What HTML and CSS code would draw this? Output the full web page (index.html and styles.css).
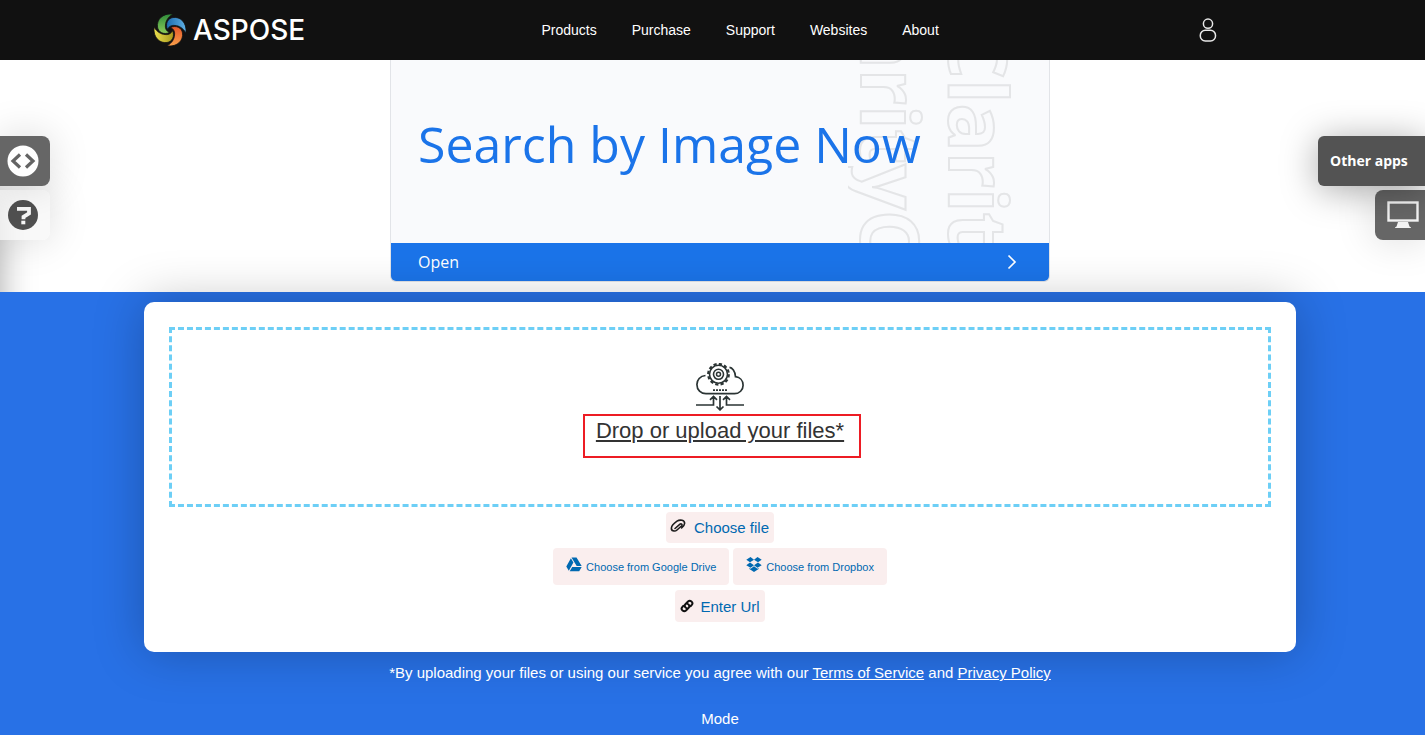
FILE: index.html
```html
<!DOCTYPE html>
<html lang="en">
<head>
<meta charset="utf-8">
<meta name="viewport" content="width=device-width, initial-scale=1">
<title>Aspose - Search by Image</title>
<link rel="stylesheet" href="styles.css">
</head>
<body>
<header class="header">
  <div class="header-inner">
    <a class="logo" href="#">
      <svg class="logo-mark" viewBox="0 0 34 34" aria-hidden="true">
        <defs>
          <linearGradient id="g-blue" x1="0" y1="1" x2="0" y2="0"><stop offset="0" stop-color="#1c6bb0"/><stop offset="1" stop-color="#5fb0e4"/></linearGradient>
          <linearGradient id="g-orange" x1="0" y1="1" x2="0" y2="0"><stop offset="0" stop-color="#e4572a"/><stop offset="1" stop-color="#f9a04a"/></linearGradient>
          <linearGradient id="g-yellow" x1="0" y1="1" x2="0" y2="0"><stop offset="0" stop-color="#a8991c"/><stop offset="1" stop-color="#ece04e"/></linearGradient>
          <linearGradient id="g-green" x1="0" y1="1" x2="0" y2="0"><stop offset="0" stop-color="#8ccb5a"/><stop offset="1" stop-color="#2e8b3a"/></linearGradient>
          <path id="blade" stroke="#111" stroke-width=".8" d="M20 1C9 0 3.500 7 4.500 14c.8 5.500 6.500 8 12 5.500-3.500-1.500-4.500-4.500-4-7.500C12.700 8 15 4 20 1z"/>
        </defs>
        <use href="#blade" fill="url(#g-green)"/>
        <use href="#blade" fill="url(#g-blue)" transform="rotate(90 17 17)"/>
        <use href="#blade" fill="url(#g-orange)" transform="rotate(180 17 17)"/>
        <use href="#blade" fill="url(#g-yellow)" transform="rotate(270 17 17)"/>
      </svg>
      <span>ASPOSE</span>
    </a>
    <nav class="nav">
      <a href="#">Products</a>
      <a href="#">Purchase</a>
      <a href="#">Support</a>
      <a href="#">Websites</a>
      <a href="#">About</a>
    </nav>
    <button class="user" type="button" aria-label="Account">
      <svg viewBox="0 0 18 24" width="18" height="24" fill="none" stroke="#e8e8e8" stroke-width="1.5" aria-hidden="true">
        <circle cx="9" cy="5.7" r="4.6"/>
        <rect x="1.3" y="12.2" width="15.2" height="10.8" rx="5"/>
      </svg>
    </button>
  </div>
</header>

<section class="banner">
  <div class="ad">
    <div class="ad-body">
      <svg class="ad-art" viewBox="0 0 201 183" aria-hidden="true">
        <text transform="translate(13 -115) rotate(90)">ClarityClarity</text>
        <text transform="translate(101 -32) rotate(90)">ClarityClarity</text>
      </svg>
      <a class="ad-title" href="#">Search by Image Now</a>
    </div>
    <a class="ad-open" href="#">
      <span>Open</span>
      <svg viewBox="0 0 10 16" width="10" height="16" fill="none" stroke="#fff" stroke-width="1.700" aria-hidden="true"><path d="M1.500 1.500L8 8l-6.500 6.500"/></svg>
    </a>
  </div>

  <div class="side side-left">
    <button class="tab tab-dark" type="button" aria-label="Code">
      <svg viewBox="0 0 32 32" width="32" height="32" aria-hidden="true"><circle cx="16" cy="16" r="15.500" fill="#fff"/><path d="M13 9.500L6 16l7 6.500M19 9.500l7 6.500-7 6.500" fill="none" stroke="#646464" stroke-width="3.200"/></svg>
    </button>
    <button class="tab tab-light" type="button" aria-label="Help">
      <svg viewBox="0 0 32 32" width="32" height="32" aria-hidden="true"><circle cx="16" cy="16" r="15" fill="#505050"/><path d="M10 9.900h12v4.600l-5.500 3.300v2.400" fill="none" stroke="#f7f7f7" stroke-width="3.800"/><path d="M14.300 21.700h4v3.600h-4z" fill="#f7f7f7"/></svg>
    </button>
  </div>
  <div class="side side-right">
    <a class="other-apps" href="#">Other apps</a>
    <button class="tab tab-screen" type="button" aria-label="Desktop">
      <svg viewBox="0 0 32 28" width="32" height="28" aria-hidden="true"><rect x="1.500" y="1.500" width="29" height="18" fill="none" stroke="#f4f4f4" stroke-width="2.400"/><path d="M11 21h10l1.500 4.500 1.500 1v.5H8v-.5l1.500-1z" fill="#f4f4f4"/></svg>
    </button>
  </div>
</section>

<main class="main">
  <div class="card">
    <div class="dropzone">
      <svg class="cloud" viewBox="0 0 48 48" width="48" height="48" fill="none" stroke="#2b3434" stroke-width="1.700" aria-hidden="true">
        <path d="M9.500 12.500C4 13 .9 17 .9 21.500c0 5.500 4 9.200 9 9.200h28.500c5 0 8.700-3.700 8.700-8.500 0-5-3.500-8-7.600-8.500C39.300 8 36 4.500 33.500 4.300"/>
        <circle cx="22.500" cy="11.300" r="9" stroke-width="1.600"/>
        <circle cx="22.500" cy="11.300" r="10.300" stroke-width="2.200" stroke-dasharray="3.200 2.193"/>
        <circle cx="22.500" cy="11.300" r="5" stroke-width="1.600"/><circle cx="22.500" cy="11.300" r="2" stroke-width="1.500"/>
        <path d="M17 27.100h14" stroke-dasharray="2 1" stroke-width="1.800"/>
        <path d="M0 42h17.500v-8M14 36.800l3.500-3.300 3.500 3.300M48 42H30.500v-8M27 36.800l3.500-3.300 3.500 3.300M24 33v13.500M20.500 43.500l3.500 3.400 3.500-3.400"/>
      </svg>
      <div class="highlight">
        <label class="drop-label" for="file">Drop or upload your files*</label>
        <input class="file-input" id="file" type="file" multiple>
      </div>
    </div>
    <div class="actions">
      <button class="pick pick-file" type="button">
        <svg viewBox="0 0 16 16" width="16" height="16" fill="none" stroke="#1c1c1c" stroke-width="1.600" stroke-linecap="round" aria-hidden="true"><path d="M5 10.500l5-4.300c1.200-1 2.700.4 1.700 1.600L7 12c-2.300 2-6 .9-5.600-2C1.700 7.500 4.500 5 7 3.200c3-2 7.800-1.200 7.600 2.300-.1 2-1.600 3.300-3 4.500"/></svg>
        <span>Choose file</span>
      </button>
      <div class="cloud-row">
        <button class="pick pick-cloud" type="button">
          <svg viewBox="0 0 16 15" width="16" height="15" fill="#0069b1" aria-hidden="true"><path d="M5.500.5h5L15.700 9h-5zM4.900 1.300l2.500 4.200-4.600 8.200L.3 9.500zM6.200 10h9.500l-2.500 4.300H3.700z"/></svg>
          <span>Choose from Google Drive</span>
        </button>
        <button class="pick pick-cloud" type="button">
          <svg viewBox="0 0 16 15" width="16" height="15" fill="#0069b1" aria-hidden="true"><path d="M4.500 0L8 2.700 4 5.300.3 2.700zM11.500 0L8 2.700l4 2.600 3.700-2.600zM4 5.500L8 8.200l-3.500 2.600L.3 8.200zM12 5.500L8 8.200l3.500 2.600 4.200-2.600zM8 9.200l3.400 2.500 1.200-.8v1.200L8 15l-4.600-2.900v-1.200l1.200.8z"/></svg>
          <span>Choose from Dropbox</span>
        </button>
      </div>
      <button class="pick pick-url" type="button">
        <svg viewBox="0 0 14 14" width="14" height="14" fill="none" stroke="#111" stroke-width="2" stroke-linecap="round" aria-hidden="true"><path d="M6.200 9c-1.700-1-1.900-2.500-.8-3.700L8 2.500c2.200-2 5.700.7 3.900 3.200L10.700 7.200M7.800 5c1.700 1 1.900 2.500.8 3.700L6 11.500c-2.200 2-5.700-.7-3.900-3.200L3.300 6.800"/></svg>
        <span>Enter Url</span>
      </button>
    </div>
  </div>
  <p class="terms">*By uploading your files or using our service you agree with our <a href="#">Terms of Service</a> and <a href="#">Privacy Policy</a></p>
  <p class="mode">Mode</p>
</main>
</body>
</html>
```

FILE: styles.css
```css
* {
  box-sizing: border-box;
}

body {
  margin: 0;
  min-height: 100vh;
  display: flex;
  flex-direction: column;
  font-family: "Liberation Sans", Arial, sans-serif;
  font-size: 15px;
  color: #fff;
  background: #2871e6;
}

a {
  color: inherit;
}

button {
  border: 0;
  padding: 0;
  font-family: inherit;
  cursor: pointer;
}

svg {
  flex: none;
}

.header {
  position: relative;
  z-index: 3;
  height: 60px;
  padding: 0 47px 0 16px;
  background: #111;
}

.header-inner {
  display: flex;
  align-items: center;
  justify-content: space-between;
  max-width: 1088px;
  height: 100%;
  margin: 0 auto;
}

.logo {
  display: flex;
  align-items: center;
  gap: 6px;
  font-family: Inter, sans-serif;
  font-size: 28px;
  font-weight: 500;
  line-height: 34px;
  text-decoration: none;
}

.logo-mark {
  width: 34px;
  height: 34px;
}

.nav {
  display: flex;
  gap: 35px;
  font-size: 14px;
}

.nav a {
  text-decoration: none;
}

.user {
  display: flex;
  align-items: center;
  justify-content: center;
  width: 66px;
  height: 60px;
  background: none;
}

.banner {
  position: relative;
  overflow: hidden;
  padding: 0 0 10px 15px;
  background: #fff;
}

.ad {
  max-width: 660px;
  margin: 0 auto;
  overflow: hidden;
  border: 1px solid #e2e4e8;
  border-top: 0;
  border-radius: 0 0 6px 6px;
  font-family: "Open Sans", "Noto Sans", sans-serif;
}

.ad-body {
  position: relative;
  display: flex;
  align-items: center;
  height: 183px;
  padding: 0 27px 16px;
  background: #f9fafc;
}

.ad-art {
  position: absolute;
  top: 0;
  right: 0;
  width: 201px;
  height: 183px;
}

.ad-art text {
  fill: none;
  stroke: #e4e5e7;
  stroke-width: 2px;
  font-size: 80px;
  font-weight: 700;
}

.ad-title {
  position: relative;
  color: #1b74e9;
  font-size: 50px;
  line-height: 60px;
  text-decoration: none;
  white-space: nowrap;
}

.ad-open {
  display: flex;
  align-items: center;
  justify-content: space-between;
  height: 38px;
  padding: 0 32px 0 27px;
  background: #1b74e9;
  font-size: 16px;
  text-decoration: none;
}

.side {
  position: absolute;
  top: 76px;
  display: flex;
  flex-direction: column;
  gap: 4px;
}

.side-left {
  left: 0;
}

.side-left::before {
  content: "";
  position: absolute;
  top: 54px;
  right: 100%;
  width: 200px;
  height: 300px;
  box-shadow: 0 0 32px rgba(0, 0, 0, 0.35);
}

.side-right {
  right: 0;
  align-items: flex-end;
}

.tab {
  position: relative;
  display: flex;
  align-items: center;
  width: 50px;
  height: 50px;
  padding-left: 7px;
  border-radius: 0 8px 8px 0;
  box-shadow: 0 0 40px rgba(0, 0, 0, 0.15);
}

.tab-dark {
  z-index: 1;
  background: #666;
}

.tab-light {
  background: rgba(247, 247, 247, 0.75);
}

.tab-screen {
  padding-left: 12px;
  border-radius: 8px 0 0 8px;
  background: #666;
}

.other-apps {
  position: relative;
  z-index: 1;
  width: 107px;
  padding: 0 12px;
  border-radius: 6px 0 0 6px;
  background: #535353;
  box-shadow: 0 4px 36px rgba(0, 0, 0, 0.35);
  font-family: "Open Sans", "Noto Sans", sans-serif;
  font-size: 14px;
  font-weight: 700;
  line-height: 50px;
  text-decoration: none;
  white-space: nowrap;
}

.main {
  position: relative;
  flex: 1;
  padding: 10px 0 0 15px;
  text-align: center;
}

.card {
  max-width: 1152px;
  margin: 0 auto;
  padding: 25px 25px 30px;
  border-radius: 10px;
  background: #fff;
  box-shadow: 0 0 50px rgba(0, 0, 0, 0.25);
}

.dropzone {
  display: flex;
  flex-direction: column;
  align-items: center;
  height: 180px;
  padding-top: 33px;
  border: 3px dashed #6dcff6;
}

.highlight {
  margin: 3px 0 0 4px;
  padding: 4px 15px 12px 11px;
  border: 2px solid #ed1c24;
  line-height: 22px;
}

.drop-label {
  color: #333;
  font-size: 22px;
  text-decoration: underline;
  cursor: pointer;
}

.file-input {
  position: absolute;
  width: 1px;
  height: 1px;
  opacity: 0;
}

.actions {
  display: flex;
  flex-direction: column;
  align-items: center;
  gap: 5px;
  padding-top: 5px;
}

.pick {
  display: flex;
  align-items: center;
  border-radius: 4px;
  background: #faeeee;
  color: #0069b1;
  font-size: 15px;
}

.pick-file {
  gap: 8px;
  height: 31px;
  padding: 0 5px 0 4px;
}

.pick-file svg {
  margin-bottom: 4px;
}

.cloud-row {
  display: flex;
  flex-wrap: wrap;
  justify-content: center;
  gap: 4px;
}

.pick-cloud {
  gap: 4px;
  height: 37px;
  padding: 0 13px;
  font-size: 11px;
}

.pick-cloud svg {
  margin-bottom: 5px;
}

.pick-url {
  gap: 6px;
  height: 32px;
  padding: 0 5px;
}

.terms {
  margin: 12px 0 0;
  line-height: 18px;
}

.mode {
  margin: 28px 0 0;
  line-height: 18px;
}
```
